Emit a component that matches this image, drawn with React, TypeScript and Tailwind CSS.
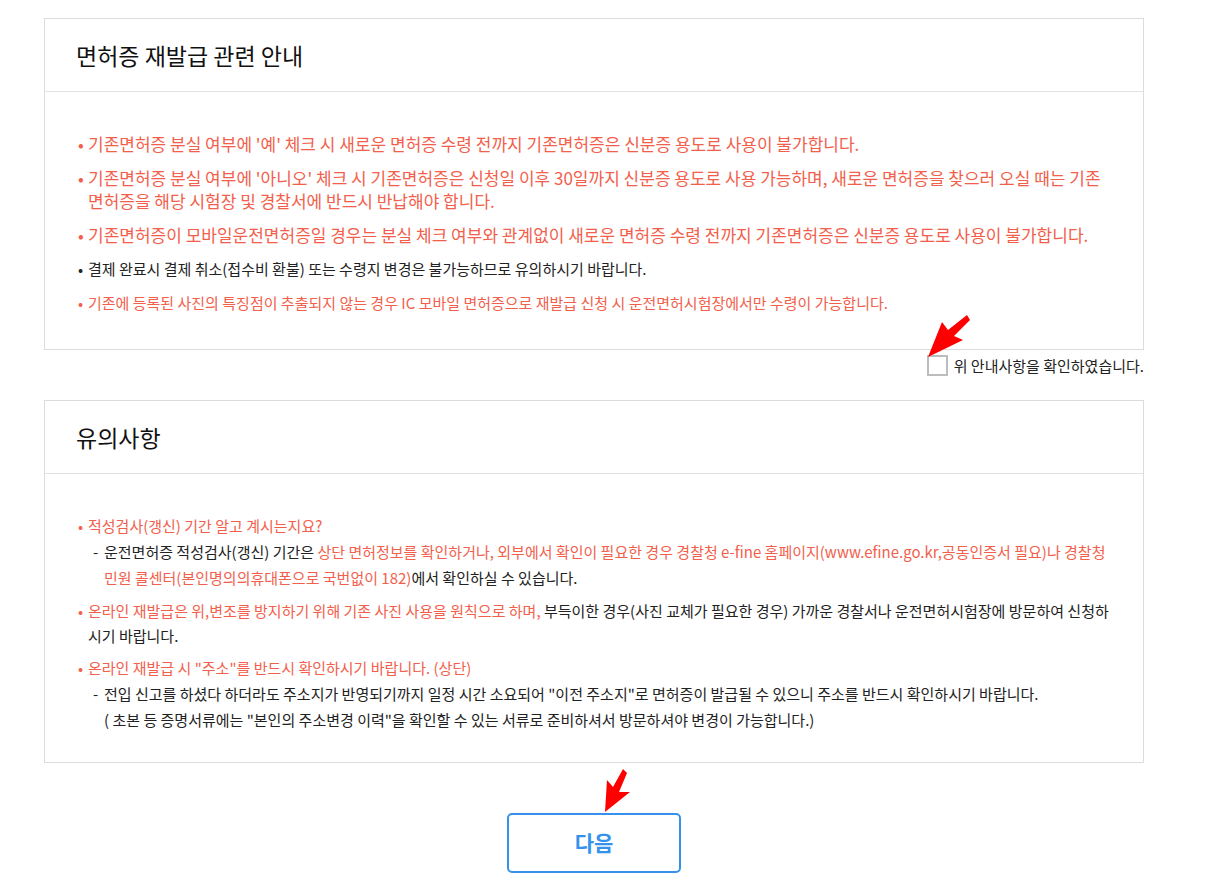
import React from 'react';

const red = 'text-[#f2604c]';

type Item = {
  tone: 'red' | 'dark';
  size?: 'lg' | 'sm';
  children: React.ReactNode;
};

const Bullet: React.FC<Item> = ({ tone, size = 'lg', children }) => (
  <li
    className={`relative pl-[10px] ${size === 'lg' ? 'text-[17px]' : 'text-[15px]'} leading-[23px] ${
      tone === 'red' ? red : 'text-[#222]'
    }`}
  >
    <span className="absolute left-0 top-0">•</span>
    {children}
  </li>
);

const Panel: React.FC<{ title: string; children: React.ReactNode }> = ({ title, children }) => (
  <section className="border border-[#dcdcdc] bg-white">
    <div className="h-[73px] flex items-center pl-[31px] border-b border-[#e2e2e2]">
      <h2 className="text-[23px] text-[#111]">{title}</h2>
    </div>
    {children}
  </section>
);

const Sub: React.FC<{ children: React.ReactNode }> = ({ children }) => (
  <p className="relative pl-[26px] text-[#222]">
    <span className="absolute left-[15px] top-0">-</span>
    {children}
  </p>
);

const Arrow: React.FC<{ points: string }> = ({ points }) => (
  <polygon points={points} fill="#ff0000" />
);

export default function App() {
  return (
    <div
      className="relative w-full min-h-[874px] bg-white"
      style={{ fontFamily: '"Noto Sans CJK KR", "Noto Sans", sans-serif' }}
    >
      <div className="ml-[44px] w-[1100px] pt-[18px]">
        <Panel title="면허증 재발급 관련 안내">
          <ul className="pl-[33px] pr-[30px] pt-[40px] pb-[35px] flex flex-col gap-[11px]">
            <Bullet tone="red">
              기존면허증 분실 여부에 '예' 체크 시 새로운 면허증 수령 전까지 기존면허증은 신분증 용도로 사용이 불가합니다.
            </Bullet>
            <Bullet tone="red">
              기존면허증 분실 여부에 '아니오' 체크 시 기존면허증은 신청일 이후 30일까지 신분증 용도로 사용 가능하며, 새로운 면허증을 찾으러 오실 때는 기존 면허증을 해당 시험장 및 경찰서에 반드시 반납해야 합니다.
            </Bullet>
            <Bullet tone="red">
              기존면허증이 모바일운전면허증일 경우는 분실 체크 여부와 관계없이 새로운 면허증 수령 전까지 기존면허증은 신분증 용도로 사용이 불가합니다.
            </Bullet>
            <Bullet tone="dark" size="sm">
              결제 완료시 결제 취소(접수비 환불) 또는 수령지 변경은 불가능하므로 유의하시기 바랍니다.
            </Bullet>
            <Bullet tone="red" size="sm">
              기존에 등록된 사진의 특징점이 추출되지 않는 경우 IC 모바일 면허증으로 재발급 신청 시 운전면허시험장에서만 수령이 가능합니다.
            </Bullet>
          </ul>
        </Panel>

        <label className="flex items-center justify-end gap-[6px] mt-[5px] text-[15px] leading-[20px] text-[#222]">
          <span className="w-[21px] h-[21px] border-2 border-[#bdbdbd] bg-white" />
          위 안내사항을 확인하였습니다.
        </label>

        <div className="mt-[24px]">
          <Panel title="유의사항">
            <div className="pl-[33px] pr-[30px] pt-[39px] pb-[29px] text-[15px] leading-[26px] flex flex-col gap-[7px]">
              <div>
                <p className={`relative pl-[10px] ${red}`}>
                  <span className="absolute left-0 top-0">•</span>
                  적성검사(갱신) 기간 알고 계시는지요?
                </p>
                <Sub>
                  운전면허증 적성검사(갱신) 기간은{' '}
                  <span className={red}>
                    상단 면허정보를 확인하거나, 외부에서 확인이 필요한 경우 경찰청 e-fine 홈페이지(www.efine.go.kr,공동인증서 필요)나 경찰청 민원 콜센터(본인명의의휴대폰으로 국번없이 182)
                  </span>
                  에서 확인하실 수 있습니다.
                </Sub>
              </div>
              <p className="relative pl-[10px] text-[#222] leading-[25px]">
                <span className={`absolute left-0 top-0 ${red}`}>•</span>
                <span className={red}>온라인 재발급은 위,변조를 방지하기 위해 기존 사진 사용을 원칙으로 하며,</span> 부득이한 경우(사진 교체가 필요한 경우) 가까운 경찰서나 운전면허시험장에 방문하여 신청하시기 바랍니다.
              </p>
              <div>
                <p className={`relative pl-[10px] ${red}`}>
                  <span className="absolute left-0 top-0">•</span>
                  온라인 재발급 시 "주소"를 반드시 확인하시기 바랍니다. (상단)
                </p>
                <Sub>
                  전입 신고를 하셨다 하더라도 주소지가 반영되기까지 일정 시간 소요되어 "이전 주소지"로 면허증이 발급될 수 있으니 주소를 반드시 확인하시기 바랍니다.
                  <br />( 초본 등 증명서류에는 "본인의 주소변경 이력"을 확인할 수 있는 서류로 준비하셔서 방문하셔야 변경이 가능합니다.)
                </Sub>
              </div>
            </div>
          </Panel>
        </div>

        <div className="flex justify-center mt-[50px] pb-[2px]">
          <button className="w-[174px] h-[60px] border-2 border-[#3592ec] rounded-[5px] bg-white text-[21px] font-bold text-[#3592ec]">
            다음
          </button>
        </div>
      </div>

      <svg className="absolute inset-0 w-full h-full pointer-events-none" viewBox="0 0 1216 874" preserveAspectRatio="xMinYMin meet">
        <Arrow points="928,357 942,322 948,330 967,315 970,320 954,336 963,340" />
        <Arrow points="605,812 607,780 613,787 623,769 627,773 619,792 630,792" />
      </svg>
    </div>
  );
}
